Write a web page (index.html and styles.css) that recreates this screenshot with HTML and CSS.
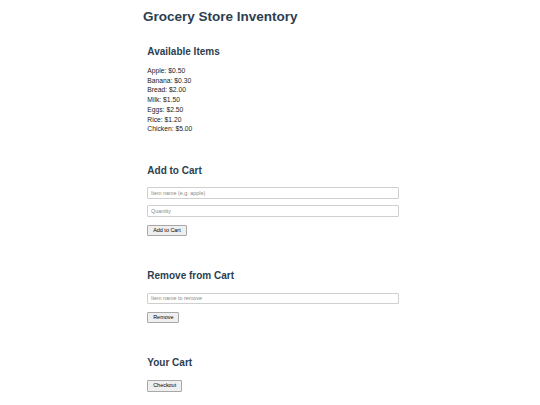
FILE: index.html
```html
<!DOCTYPE html>
<html lang="en">
<head>
<meta charset="utf-8">
<title>Grocery Store Inventory</title>
<link rel="stylesheet" href="styles.css">
</head>
<body>
<div class="container">
  <h1 class="title">Grocery Store Inventory</h1>

  <section class="section inventory">
    <h2 class="section-title">Available Items</h2>
    <ul class="items">
      <li>Apple: $0.50</li>
      <li>Banana: $0.30</li>
      <li>Bread: $2.00</li>
      <li>Milk: $1.50</li>
      <li>Eggs: $2.50</li>
      <li>Rice: $1.20</li>
      <li>Chicken: $5.00</li>
    </ul>
  </section>

  <section class="section">
    <h2 class="section-title">Add to Cart</h2>
    <div class="form">
      <input class="field" type="text" placeholder="Item name (e.g. apple)">
      <input class="field" type="number" placeholder="Quantity">
      <div class="actions"><button class="btn" type="button">Add to Cart</button></div>
    </div>
  </section>

  <section class="section">
    <h2 class="section-title">Remove from Cart</h2>
    <div class="form">
      <input class="field" type="text" placeholder="Item name to remove">
      <div class="actions"><button class="btn" type="button">Remove</button></div>
    </div>
  </section>

  <section class="section">
    <h2 class="section-title">Your Cart</h2>
    <div class="cart"></div>
    <div class="actions"><button class="btn" type="button">Checkout</button></div>
  </section>
</div>
</body>
</html>
```

FILE: styles.css
```css
* {
  box-sizing: border-box;
}

html, body {
  margin: 0;
  padding: 0;
  background: #ffffff;
}

body {
  font-family: "Liberation Sans", Arial, sans-serif;
  color: #222222;
}

.container {
  width: 254px;
  margin: 0 auto;
  padding-top: 8.7px;
  padding-bottom: 10px;
}

.title {
  margin: 0;
  font-size: 13.5px;
  line-height: 16px;
  font-weight: bold;
  color: #2c3e50;
}

.section {
  padding-left: 4.3px;
  margin-top: 34px;
}

.inventory {
  margin-top: 21.8px;
  margin-bottom: -3.3px;
}

.section-title {
  margin: 0;
  font-size: 10px;
  line-height: 11px;
  font-weight: bold;
  color: #2c3e50;
}

.items {
  list-style: none;
  margin: 8.6px 0 0;
  padding: 0;
  font-size: 6.75px;
  line-height: 9.7px;
  color: #222222;
}

.form {
  display: flex;
  flex-direction: column;
  gap: 6.6px;
  margin-top: 11.6px;
}

.field {
  display: block;
  width: 251.4px;
  height: 11.5px;
  margin: 0;
  padding: 0 2.7px;
  border: 1px solid #cfcfcf;
  border-radius: 1px;
  background: #ffffff;
  font-family: "Liberation Sans", Arial, sans-serif;
  font-size: 5.4px;
  color: #333333;
  outline: none;
  -moz-appearance: textfield;
}

.field::-webkit-outer-spin-button,
.field::-webkit-inner-spin-button {
  -webkit-appearance: none;
  margin: 0;
}

.field::placeholder {
  color: #8a8a8a;
}

.actions {
  display: flex;
  margin-top: 1.2px;
}

.cart {
  height: 12px;
}

.cart + .actions {
  margin-top: 0;
}

.btn {
  height: 11.4px;
  margin: 0;
  padding: 0 4.9px;
  border: 1px solid #a8a8a8;
  border-radius: 1px;
  background: #efefef;
  font-family: "Liberation Sans", Arial, sans-serif;
  font-size: 5.45px;
  line-height: 1;
  color: #000000;
  cursor: pointer;
}
```
